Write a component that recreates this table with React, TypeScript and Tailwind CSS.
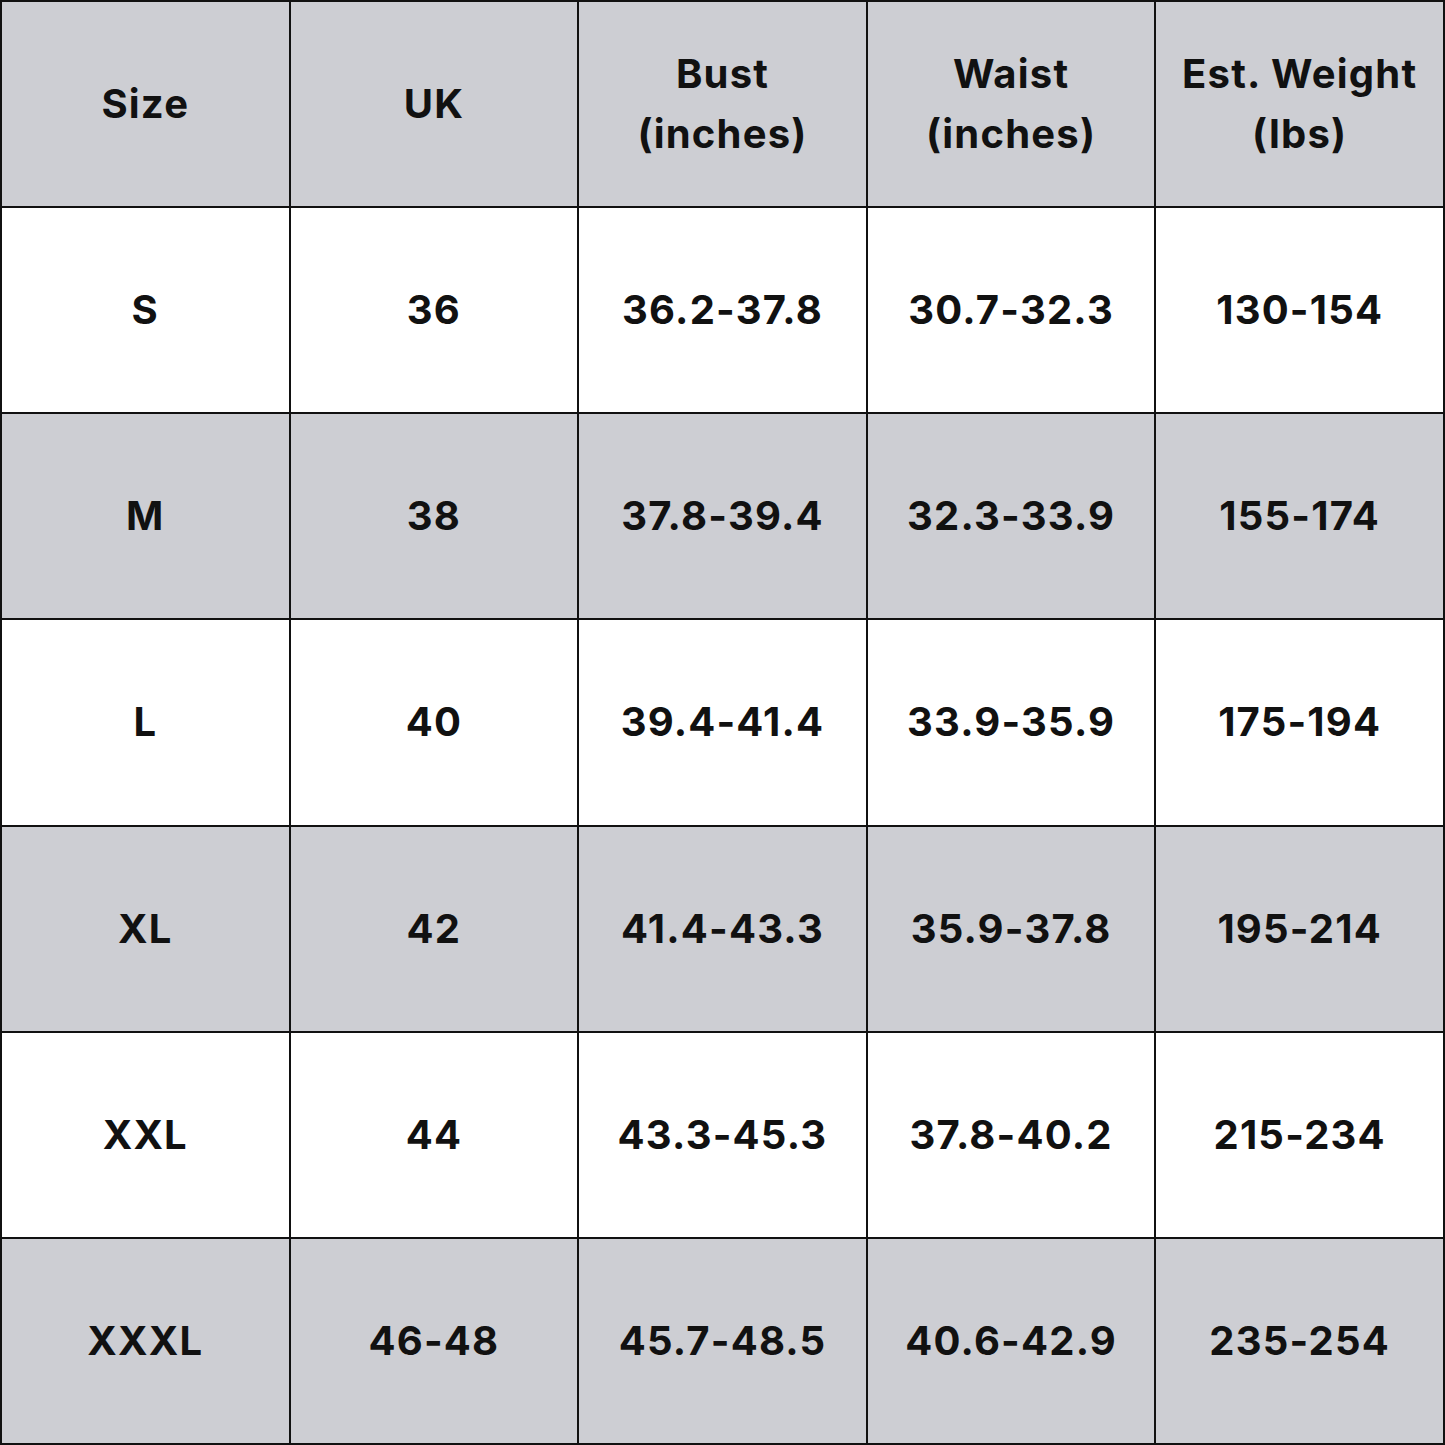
import React from 'react';

const headers = ['Size', 'UK', 'Bust\n(inches)', 'Waist\n(inches)', 'Est. Weight\n(lbs)'];

const rows = [
  ['S', '36', '36.2-37.8', '30.7-32.3', '130-154'],
  ['M', '38', '37.8-39.4', '32.3-33.9', '155-174'],
  ['L', '40', '39.4-41.4', '33.9-35.9', '175-194'],
  ['XL', '42', '41.4-43.3', '35.9-37.8', '195-214'],
  ['XXL', '44', '43.3-45.3', '37.8-40.2', '215-234'],
  ['XXXL', '46-48', '45.7-48.5', '40.6-42.9', '235-254'],
];

export default function App() {
  return (
    <div
      className="w-[1445px] h-[1445px] bg-[#111] p-[2px] grid grid-cols-5 grid-rows-7 gap-[2px] text-[#111]"
      style={{ fontFamily: 'Inter, "Open Sans", sans-serif' }}
    >
      {headers.map((h) => (
        <div
          key={h}
          className="bg-[#cdced3] flex items-center justify-center text-center whitespace-pre-line text-[40px] leading-[60px] font-bold tracking-[0.03em]"
        >
          {h}
        </div>
      ))}
      {rows.map((row, i) =>
        row.map((cell, j) => (
          <div
            key={`${i}-${j}`}
            className={`flex items-center justify-center text-[40px] font-bold tracking-[0.03em] ${
              i % 2 === 0 ? 'bg-white' : 'bg-[#cdced3]'
            }`}
          >
            {cell}
          </div>
        )),
      )}
    </div>
  );
}
